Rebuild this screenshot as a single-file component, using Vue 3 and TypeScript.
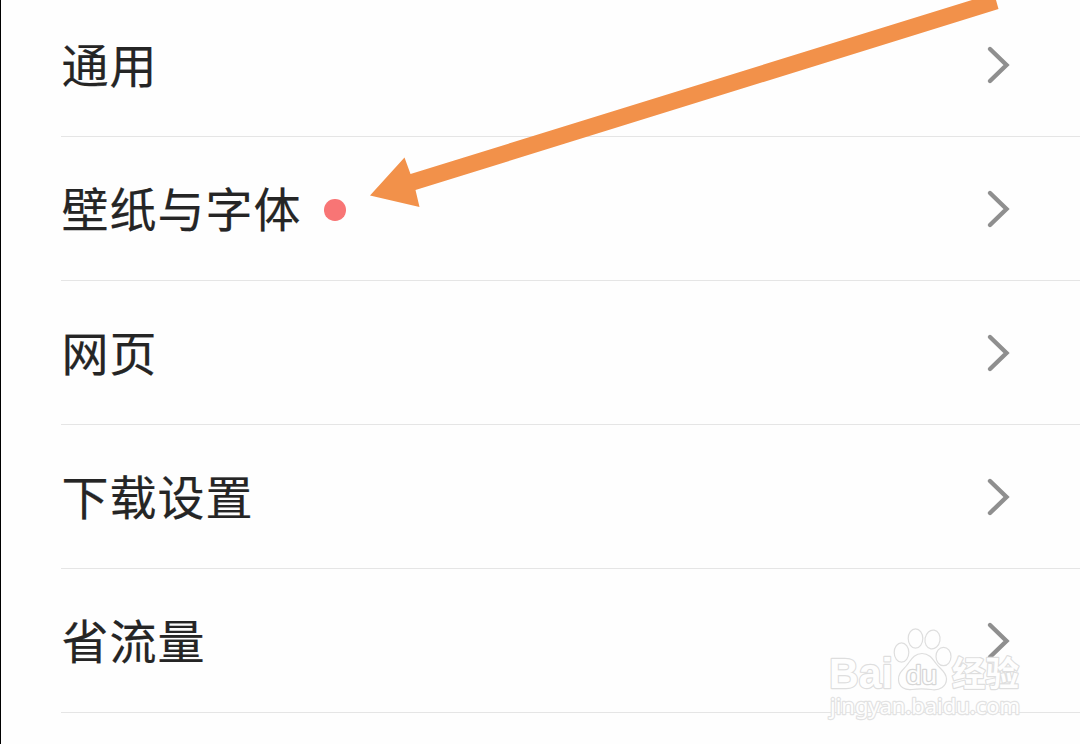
<script setup lang="ts">
interface SettingItem {
  label: string
  badge?: boolean
}

const items: SettingItem[] = [
  { label: '通用' },
  { label: '壁纸与字体', badge: true },
  { label: '网页' },
  { label: '下载设置' },
  { label: '省流量' },
]
</script>

<template>
  <main class="screen">
    <ul class="list">
      <li v-for="item in items" :key="item.label" class="row">
        <span class="label">{{ item.label }}</span>
        <span v-if="item.badge" class="dot"></span>
        <svg class="chevron" width="26" height="40" viewBox="0 0 26 40">
          <path d="M4 4 L20.5 20 L4 36" />
        </svg>
      </li>
    </ul>

    <svg class="arrow" width="640" height="220" viewBox="365 0 640 220">
      <polygon points="370,195.5 404.5,157.5 410.5,174 972,0 996,0 998.5,9 415.5,190 419.5,207" />
    </svg>

    <svg class="watermark" width="220" height="134" viewBox="820 610 220 134">
      <g class="mark">
        <text class="latin" x="829" y="688" textLength="64" lengthAdjust="spacingAndGlyphs">Bai</text>
        <ellipse cx="901.5" cy="652.5" rx="7.3" ry="9.7" />
        <ellipse cx="915.5" cy="638.5" rx="7.3" ry="9.7" />
        <ellipse cx="932.5" cy="639.5" rx="7.5" ry="9.5" transform="rotate(10 932.5 639.5)" />
        <ellipse cx="943.5" cy="656.5" rx="7.5" ry="9.2" />
        <path d="M922 653.5 C914 653.5 911 660 907 665 C903 670 898 673 898.5 680 C899 687 905 690.5 912 689.5 C919 688.5 924 688.5 931 689.5 C940 691 946.5 686 946.5 679 C946.5 672 940 669 936 663.5 C932 658 929 653.5 922 653.5 Z" />
        <text class="du" x="906" y="683.5" textLength="31" lengthAdjust="spacingAndGlyphs">du</text>
        <text class="cjk" x="952" y="686" textLength="67" lengthAdjust="spacingAndGlyphs">经验</text>
        <text class="url" x="830" y="714" textLength="190" lengthAdjust="spacingAndGlyphs">jingyan.baidu.com</text>
      </g>
    </svg>
  </main>
</template>

<style>
body {
  margin: 0;
  overflow: hidden;
}
</style>

<style scoped>
.screen {
  position: relative;
  box-sizing: border-box;
  width: 1080px;
  height: 744px;
  overflow: hidden;
  border-left: 1px solid #000;
  background: #fefefe;
  font-family: "Noto Sans CJK SC", sans-serif;
}
.list {
  list-style: none;
  margin: -7px 0 0;
  padding: 0 0 0 60px;
}
.row {
  box-sizing: border-box;
  height: 144px;
  display: flex;
  align-items: center;
  padding-right: 68px;
  border-bottom: 1px solid #e5e5e5;
}
.label {
  padding: 0 0 3px 0.5px;
  font-size: 47px;
  letter-spacing: 1px;
  line-height: 72px;
  color: #252525;
  -webkit-text-stroke: 0.2px #252525;
}
.dot {
  width: 21.5px;
  height: 21.5px;
  margin: 3px 0 0 22.7px;
  border-radius: 50%;
  background: #f87575;
}
.chevron {
  margin-left: auto;
}
.chevron path {
  fill: none;
  stroke: #8f8f8f;
  stroke-width: 4.4;
  stroke-linecap: round;
}
.arrow {
  position: absolute;
  left: 364px;
  top: 0;
  fill: #f2914a;
}
.watermark {
  position: absolute;
  left: 819px;
  top: 610px;
}
.mark {
  fill: #fefefe;
  stroke: #dedede;
  stroke-width: 1.2;
}
.mark text {
  paint-order: stroke;
  stroke-width: 2.4;
  stroke-linejoin: round;
}
.mark .latin {
  font: bold 43px "Liberation Sans", sans-serif;
}
.mark .du {
  font: 25px "Liberation Sans", sans-serif;
  stroke: #d6d6d6;
}
.mark .cjk {
  font: bold 34px "Noto Sans CJK SC", sans-serif;
}
.mark .url {
  font: 22px "Noto Sans", sans-serif;
  stroke: #e2e2e2;
}
</style>
